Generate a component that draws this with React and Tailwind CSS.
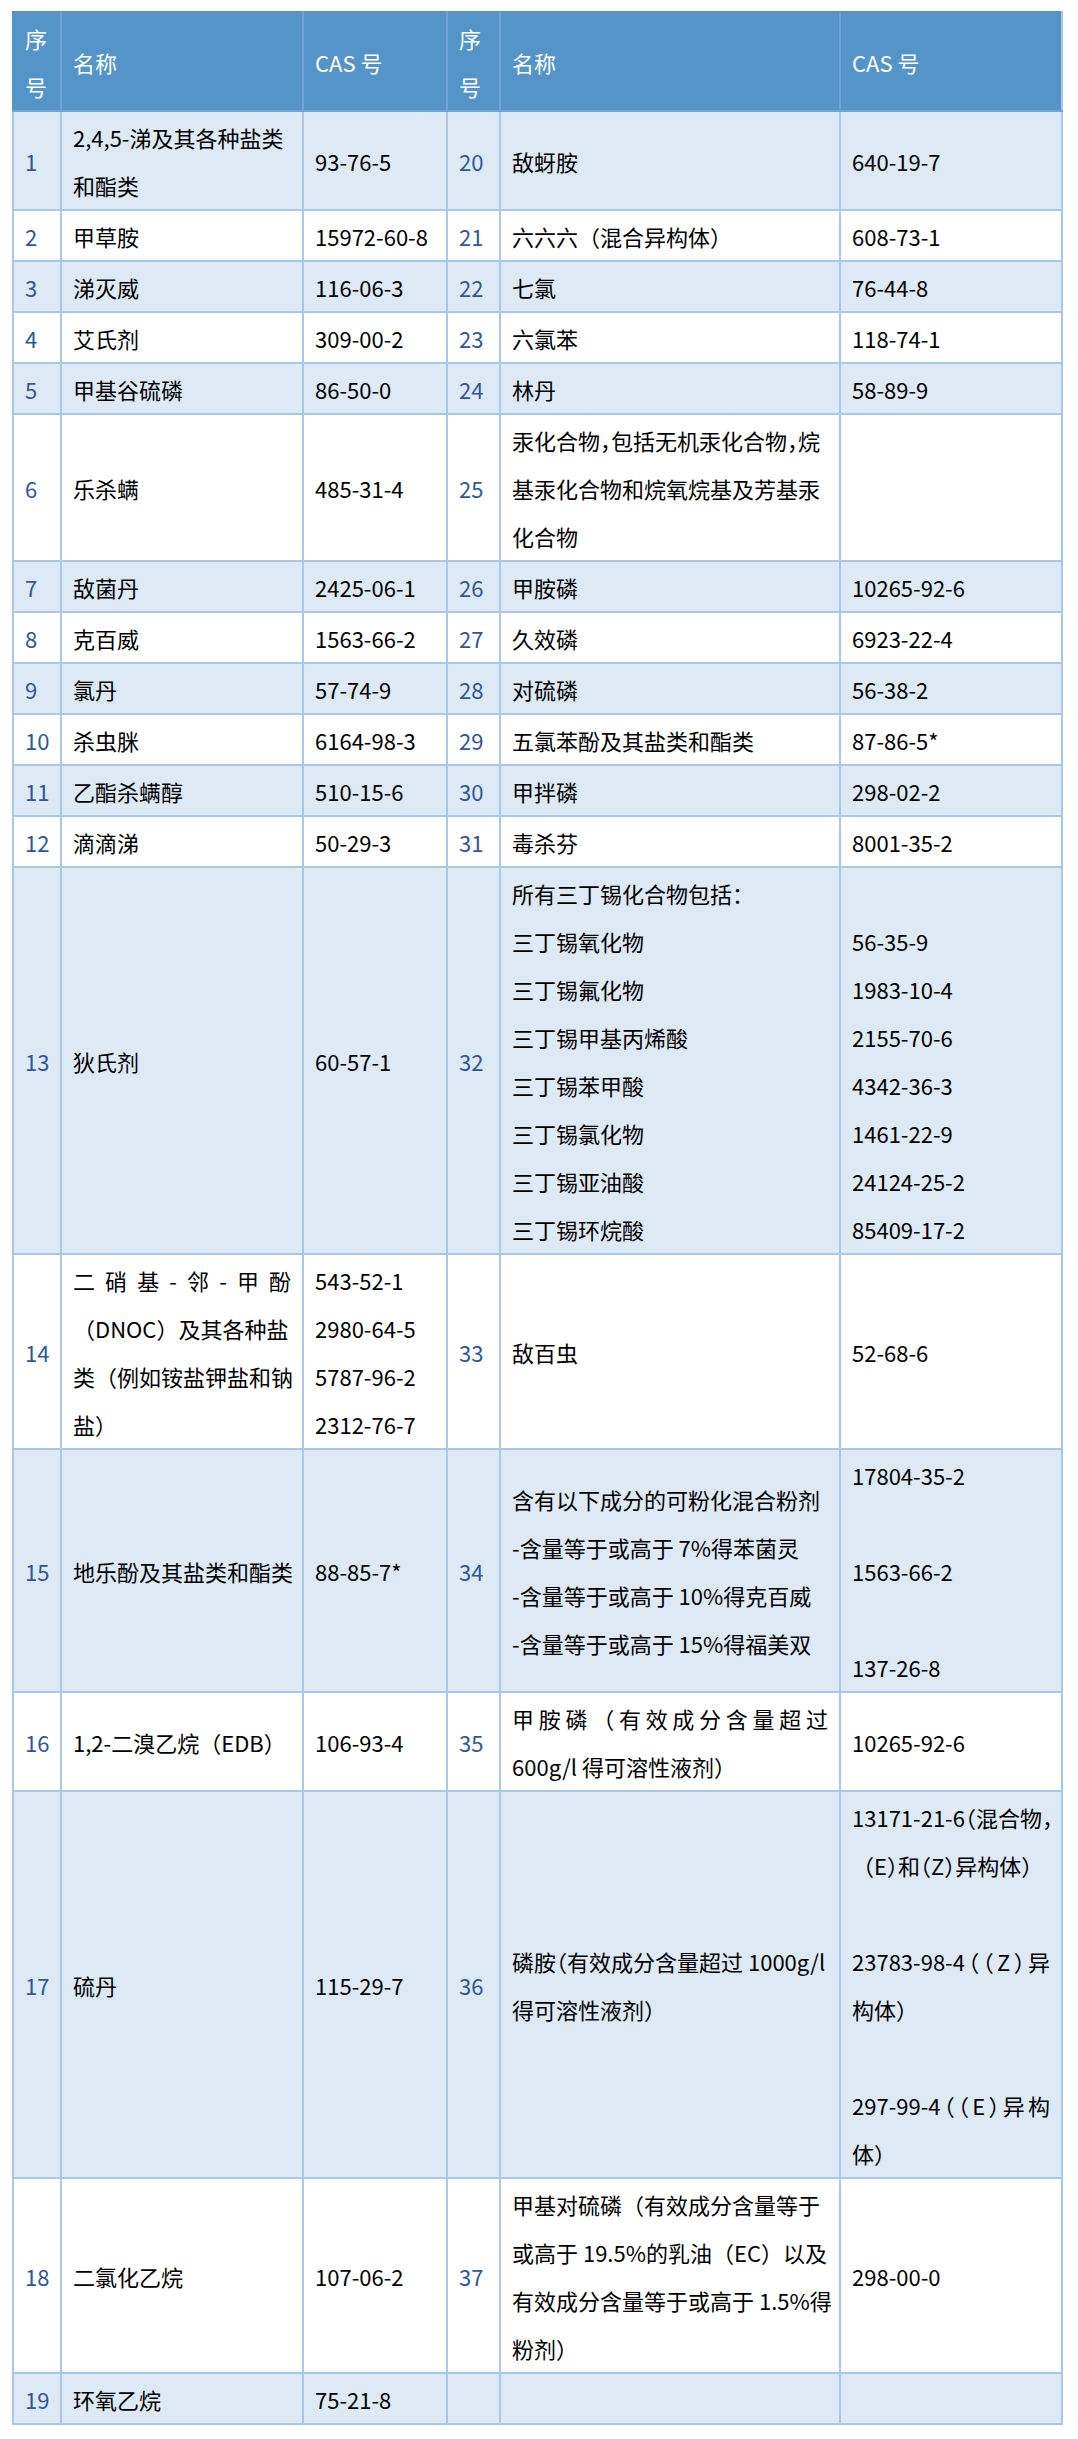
import React from "react";

const H = ({ children }) => (
  <span className="[font-feature-settings:'halt']">{children}</span>
);

const J = (t) => ({ t, j: true });

const rows = [
  { a: "1", an: ["2,4,5-涕及其各种盐类", "和酯类"], ac: ["93-76-5"], b: "20", bn: ["敌蚜胺"], bc: ["640-19-7"] },
  { a: "2", an: ["甲草胺"], ac: ["15972-60-8"], b: "21", bn: ["六六六（混合异构体）"], bc: ["608-73-1"] },
  { a: "3", an: ["涕灭威"], ac: ["116-06-3"], b: "22", bn: ["七氯"], bc: ["76-44-8"] },
  { a: "4", an: ["艾氏剂"], ac: ["309-00-2"], b: "23", bn: ["六氯苯"], bc: ["118-74-1"] },
  { a: "5", an: ["甲基谷硫磷"], ac: ["86-50-0"], b: "24", bn: ["林丹"], bc: ["58-89-9"] },
  {
    a: "6",
    an: ["乐杀螨"],
    ac: ["485-31-4"],
    b: "25",
    bn: [
      <>汞化合物<H>，</H>包括无机汞化合物<H>，</H>烷</>,
      "基汞化合物和烷氧烷基及芳基汞",
      "化合物",
    ],
    bc: [""],
  },
  { a: "7", an: ["敌菌丹"], ac: ["2425-06-1"], b: "26", bn: ["甲胺磷"], bc: ["10265-92-6"] },
  { a: "8", an: ["克百威"], ac: ["1563-66-2"], b: "27", bn: ["久效磷"], bc: ["6923-22-4"] },
  { a: "9", an: ["氯丹"], ac: ["57-74-9"], b: "28", bn: ["对硫磷"], bc: ["56-38-2"] },
  { a: "10", an: ["杀虫脒"], ac: ["6164-98-3"], b: "29", bn: ["五氯苯酚及其盐类和酯类"], bc: ["87-86-5*"] },
  { a: "11", an: ["乙酯杀螨醇"], ac: ["510-15-6"], b: "30", bn: ["甲拌磷"], bc: ["298-02-2"] },
  { a: "12", an: ["滴滴涕"], ac: ["50-29-3"], b: "31", bn: ["毒杀芬"], bc: ["8001-35-2"] },
  {
    a: "13",
    an: ["狄氏剂"],
    ac: ["60-57-1"],
    b: "32",
    bn: [
      <>所有三丁锡化合物包括<H>：</H></>,
      "三丁锡氧化物",
      "三丁锡氟化物",
      "三丁锡甲基丙烯酸",
      "三丁锡苯甲酸",
      "三丁锡氯化物",
      "三丁锡亚油酸",
      "三丁锡环烷酸",
    ],
    bc: ["", "56-35-9", "1983-10-4", "2155-70-6", "4342-36-3", "1461-22-9", "24124-25-2", "85409-17-2"],
  },
  {
    a: "14",
    an: [J("二硝基-邻-甲酚"), "（DNOC）及其各种盐", "类（例如铵盐钾盐和钠", "盐）"],
    ac: ["543-52-1", "2980-64-5", "5787-96-2", "2312-76-7"],
    b: "33",
    bn: ["敌百虫"],
    bc: ["52-68-6"],
  },
  {
    a: "15",
    an: ["地乐酚及其盐类和酯类"],
    ac: ["88-85-7*"],
    b: "34",
    bn: [
      "含有以下成分的可粉化混合粉剂",
      "-含量等于或高于 7%得苯菌灵",
      "-含量等于或高于 10%得克百威",
      "-含量等于或高于 15%得福美双",
    ],
    bc: ["17804-35-2", "", "1563-66-2", "", "137-26-8"],
  },
  {
    a: "16",
    an: ["1,2-二溴乙烷（EDB）"],
    ac: ["106-93-4"],
    b: "35",
    bn: [J("甲胺磷（有效成分含量超过"), "600g/l 得可溶性液剂）"],
    bc: ["10265-92-6"],
  },
  {
    a: "17",
    an: ["硫丹"],
    ac: ["115-29-7"],
    b: "36",
    bn: [<>磷胺<H>（</H>有效成分含量超过 1000g/l</>, "得可溶性液剂）"],
    bc: [
      <>13171-21-6<H>（</H>混合物<H>，</H></>,
      <>（E<H>）</H>和<H>（</H>Z<H>）</H>异构体）</>,
      "",
      J(<>23783-98-4<H>（（</H>Z<H>）</H>异</>),
      "构体）",
      "",
      J(<>297-99-4<H>（（</H>E<H>）</H>异构</>),
      "体）",
    ],
  },
  {
    a: "18",
    an: ["二氯化乙烷"],
    ac: ["107-06-2"],
    b: "37",
    bn: [
      "甲基对硫磷（有效成分含量等于",
      "或高于 19.5%的乳油（EC）以及",
      "有效成分含量等于或高于 1.5%得",
      "粉剂）",
    ],
    bc: ["298-00-0"],
  },
  { a: "19", an: ["环氧乙烷"], ac: ["75-21-8"], b: "", bn: [""], bc: [""] },
];

function Line({ c }) {
  if (c === "") return <div className="h-[48px]">&nbsp;</div>;
  if (c && typeof c === "object" && !React.isValidElement(c) && c.j) {
    return (
      <div className="h-[48px] text-justify [text-align-last:justify] whitespace-nowrap">
        {c.t}
      </div>
    );
  }
  return <div className="h-[48px] whitespace-nowrap">{c}</div>;
}

const cellBase =
  "border-2 border-[#a7c8e8] px-[11px] pt-px pb-0 align-middle text-left leading-[48px]";

function Cell({ lines, num }) {
  return (
    <td className={cellBase + (num ? " text-[#30569a]" : " text-black")}>
      {lines.map((c, i) => (
        <Line key={i} c={c} />
      ))}
    </td>
  );
}

const headCell =
  "border-2 border-[#6fa4d3] border-t-[#5494c8] bg-[#5494c8] px-[11px] pt-px pb-0 align-middle text-left font-normal leading-[48px] text-white";

export default function App() {
  return (
    <div className="min-h-[2439px] w-full bg-white pt-[11px] font-['Noto_Sans_CJK_SC','Noto_Sans',sans-serif] text-[22px]">
      <table className="ml-[12px] w-[1049px] table-fixed border-collapse">
        <colgroup>
          <col className="w-[48px]" />
          <col className="w-[242px]" />
          <col className="w-[144px]" />
          <col className="w-[53px]" />
          <col className="w-[340px]" />
          <col className="w-[222px]" />
        </colgroup>
        <thead>
          <tr>
            <th className={headCell + " border-l-[#5494c8]"}>
              <div>序</div>
              <div>号</div>
            </th>
            <th className={headCell}>名称</th>
            <th className={headCell}>CAS 号</th>
            <th className={headCell}>
              <div>序</div>
              <div>号</div>
            </th>
            <th className={headCell}>名称</th>
            <th className={headCell + " border-r-[#a7c8e8]"}>CAS 号</th>
          </tr>
        </thead>
        <tbody>
          {rows.map((r, i) => (
            <tr key={i} className={i % 2 === 0 ? "bg-[#dde9f4]" : "bg-white"}>
              <Cell lines={[r.a]} num />
              <Cell lines={r.an} />
              <Cell lines={r.ac} />
              <Cell lines={[r.b]} num />
              <Cell lines={r.bn} />
              <Cell lines={r.bc} />
            </tr>
          ))}
        </tbody>
      </table>
    </div>
  );
}
